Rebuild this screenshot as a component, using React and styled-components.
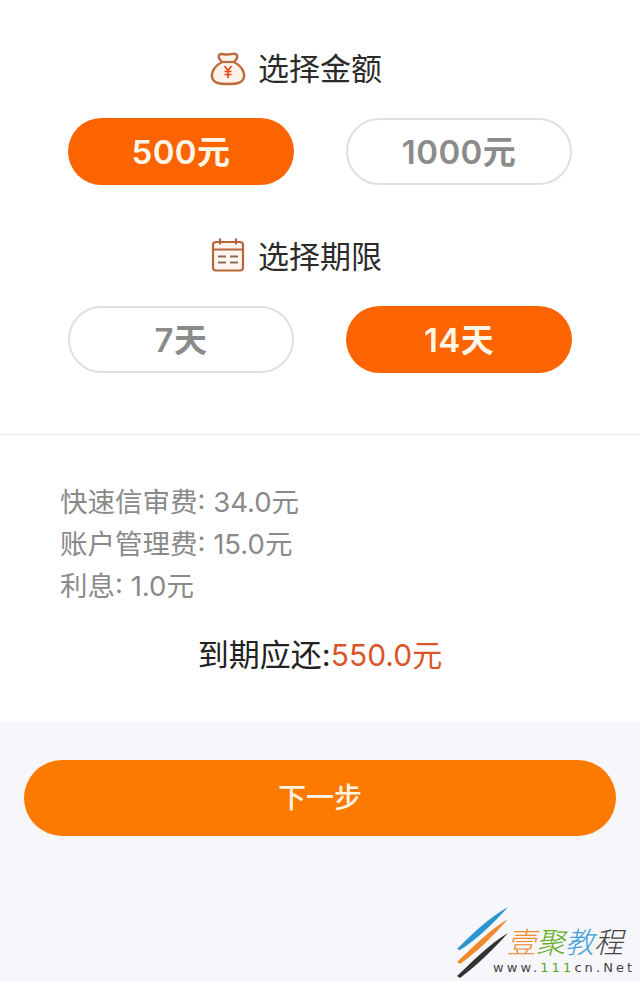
import React from "react";
import styled, { createGlobalStyle } from "styled-components";

const FONT = `Inter, "Noto Sans CJK SC", sans-serif`;

const GlobalStyle = createGlobalStyle`
  html, body { margin: 0; padding: 0; background: #f6f6fb; }
  body { font-family: ${FONT}; }
`;

const Page = styled.div`
  position: relative;
  width: 640px;
  height: 981px;
  overflow: hidden;
  background: #f6f6fb;
`;

const Panel = styled.section`
  background: #fff;
  padding: ${p => p.$padding};
  border-bottom: ${p => (p.$divider ? "1px solid #ece8ec" : "none")};
`;

const Heading = styled.h2`
  display: flex;
  align-items: center;
  justify-content: center;
  gap: 12px;
  height: 36px;
  margin: 0 0 32px;
  padding-right: 48px;
  font-size: 31px;
  font-weight: 400;
  color: #2b2b2b;
`;

const HeadingLabel = styled.span`
  padding-bottom: 3px;
`;

const PillRow = styled.div`
  display: flex;
  justify-content: space-between;
  width: 504px;
  margin: 0 0 53px 68px;
  &:last-child { margin-bottom: 0; }
`;

const Pill = styled.div`
  display: flex;
  align-items: center;
  justify-content: center;
  box-sizing: border-box;
  width: 226px;
  height: 67px;
  padding-bottom: 4px;
  border-radius: 34px;
  font-size: 33px;
  font-weight: 600;
  letter-spacing: 0.4px;
  background: ${p => (p.$active ? "#fb6400" : "#fff")};
  color: ${p => (p.$active ? "#fff6e8" : "#8b8b8b")};
  border: ${p => (p.$active ? "none" : "2px solid #e0e0e0")};
`;

const FeeList = styled.div`
  margin-left: 60px;
`;

const Fee = styled.div`
  height: 42px;
  line-height: 42px;
  font-size: 27.5px;
  color: #8a8a8a;
`;

const Total = styled.div`
  margin-top: 27px;
  text-align: center;
  font-size: 31px;
  font-weight: 400;
  line-height: 42px;
  color: #222;
  span { font-size: 30px; color: #d9552a; }
`;

const NextButton = styled.button`
  display: block;
  width: 592px;
  height: 76px;
  margin: 38px 0 0 24px;
  padding: 0 0 4px;
  border: none;
  border-radius: 38px;
  background: #fc7a00;
  color: #fff3e0;
  font-family: ${FONT};
  font-size: 28px;
  font-weight: 500;
`;

const Watermark = styled.div`
  position: absolute;
  right: 0;
  bottom: 0;
  width: 186px;
  height: 75px;
`;

const Brand = styled.div`
  position: absolute;
  left: 53px;
  top: 19px;
  display: flex;
  font-size: 29px;
  line-height: 36px;
  font-style: italic;
  font-weight: 300;
`;

const BrandChar = styled.span`
  color: ${p => p.$color};
`;

const Site = styled.div`
  position: absolute;
  left: 39px;
  top: 54px;
  font-family: "DejaVu Sans", sans-serif;
  font-size: 13px;
  line-height: 16px;
  letter-spacing: 3.1px;
  white-space: nowrap;
  color: #444;
  b { font-weight: 400; color: #5aa51c; }
`;

const BagIcon = () => (
  <svg width="36" height="36" viewBox="0 0 36 36" fill="none">
    <path d="M12 12 C9 9 8 6 9.5 4.5 C11.5 3 14 5 18 4.5 C22 4 24.5 3 26.5 4.5 C28 6 27 9 24 12 C30 15 35 21 34 27 C33 33 27 34 18 34 C9 34 3 33 2 27 C1 21 6 15 12 12 Z" fill="#fdf3ea" stroke="#bd6a3e" strokeWidth="2.4" />
    <path d="M12 12 H24" stroke="#bd6a3e" strokeWidth="2.2" />
    <path d="M14.5 16 L18 20.5 L21.5 16 M18 20.5 V28 M14.5 21.5 H21.5 M14.5 24.5 H21.5" stroke="#e8461a" strokeWidth="1.7" />
  </svg>
);

const CalendarIcon = () => (
  <svg width="36" height="36" viewBox="0 0 36 36" fill="none">
    <rect x="3" y="4" width="30" height="28.5" rx="3" fill="#fdf6f0" stroke="#b9653a" strokeWidth="2.2" />
    <path d="M3 11.5 H33 M10 0.5 V6.5 M26 0.5 V6.5" stroke="#b9653a" strokeWidth="2.2" />
    <path d="M8 18.5 H16 M20 18.5 H28 M8 24.5 H16 M20 24.5 H28" stroke="#8f6a52" strokeWidth="2.2" />
  </svg>
);

const Logo = () => (
  <svg width="56" height="75" viewBox="0 0 56 75" style={{ position: "absolute", left: 0, top: 0 }}>
    <path d="M3 43 C16 30 34 12 54 1 C40 17 22 34 6 44 Z" fill="#2b95cf" />
    <path d="M3 56 C16 44 34 25 54 13 C40 29 22 47 6 58 Z" fill="#ee8a2a" />
    <path d="M3 70 C16 58 34 39 54 27 C40 43 22 60 6 72 Z" fill="#333" />
  </svg>
);

const App = () => (
  <Page>
    <GlobalStyle />
    <Panel $divider $padding="50px 0 61px">
      <Heading><BagIcon /><HeadingLabel>选择金额</HeadingLabel></Heading>
      <PillRow>
        <Pill $active>500元</Pill>
        <Pill>1000元</Pill>
      </PillRow>
      <Heading><CalendarIcon /><HeadingLabel>选择期限</HeadingLabel></Heading>
      <PillRow>
        <Pill>7天</Pill>
        <Pill $active>14天</Pill>
      </PillRow>
    </Panel>
    <Panel $padding="46px 0 46px">
      <FeeList>
        <Fee>快速信审费: 34.0元</Fee>
        <Fee>账户管理费: 15.0元</Fee>
        <Fee>利息: 1.0元</Fee>
      </FeeList>
      <Total>到期应还:<span>550.0元</span></Total>
    </Panel>
    <NextButton>下一步</NextButton>
    <Watermark>
      <Logo />
      <Brand>
        <BrandChar $color="#ee8a2a">壹</BrandChar>
        <BrandChar $color="#62ad24">聚</BrandChar>
        <BrandChar $color="#3d9fd4">教</BrandChar>
        <BrandChar $color="#444">程</BrandChar>
      </Brand>
      <Site>www.<b>111</b>cn.Net</Site>
    </Watermark>
  </Page>
);

export default App;
